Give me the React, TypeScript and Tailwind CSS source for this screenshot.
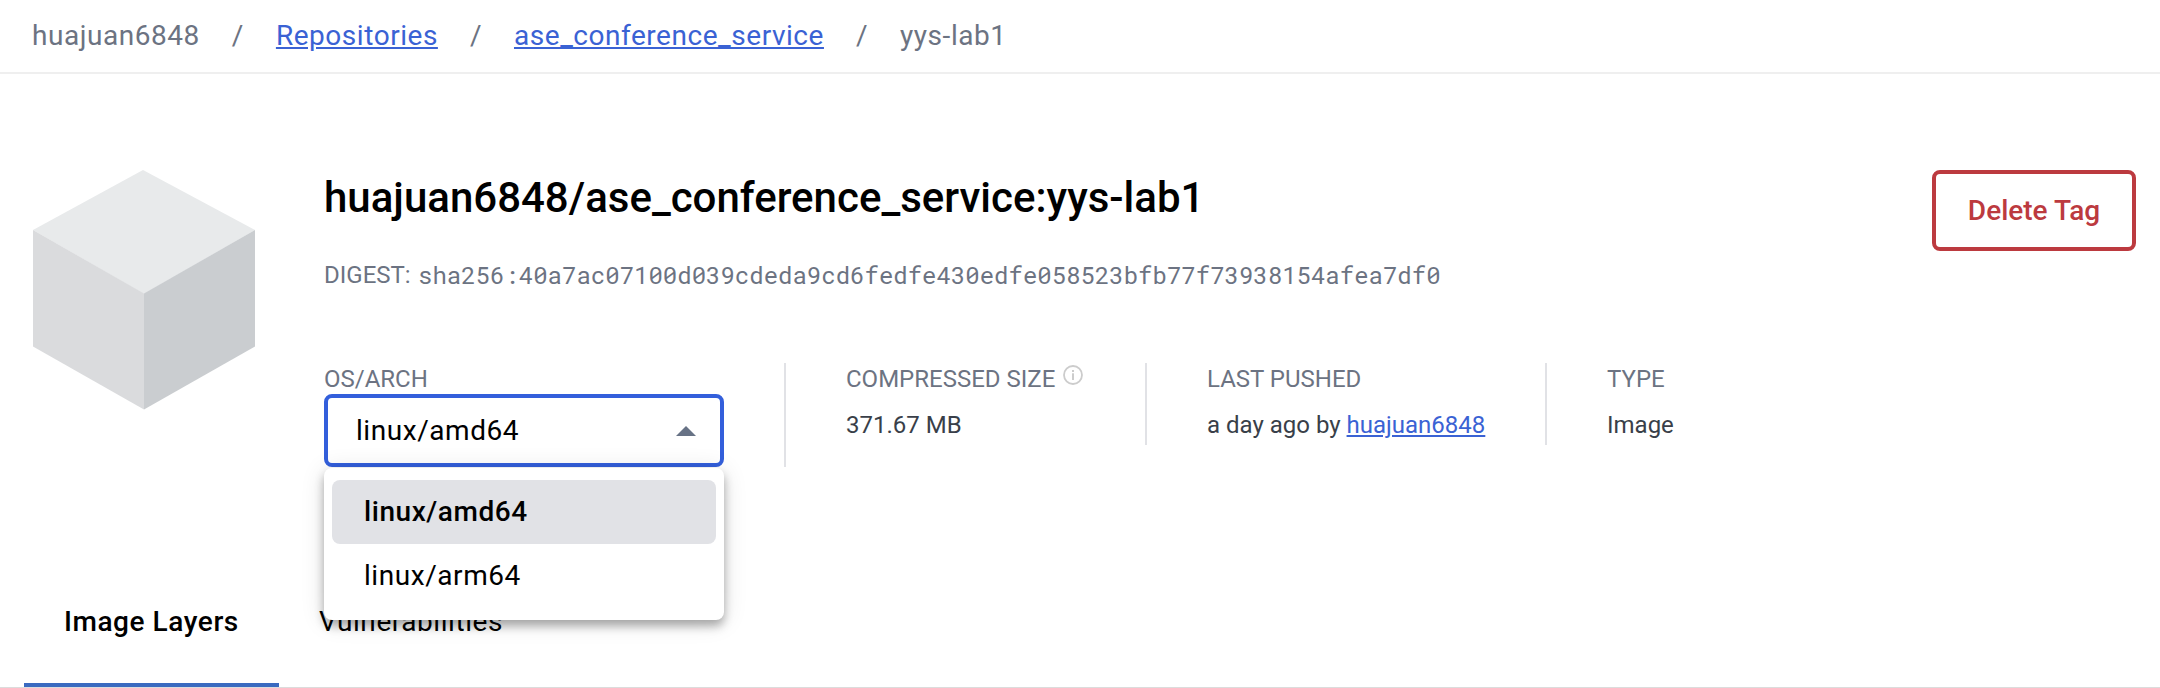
import { ReactNode } from "react";

const digest =
  "sha256:40a7ac07100d039cdeda9cd6fedfe430edfe058523bfb77f73938154afea7df0";

function Cube() {
  return (
    <svg className="block h-[240px] w-[224px]" viewBox="0 0 224 240">
      <polygon points="111,0 223,60 112,124 1,60" fill="#e8eaeb" />
      <polygon points="1,60 112,123.500 112,239.500 1,176.500" fill="#dadbdd" />
      <polygon points="223,60 112,123.500 112,239.500 223,176.500" fill="#cacdd0" />
    </svg>
  );
}

function InfoIcon() {
  return (
    <svg className="mt-0.5 block h-5 w-5" viewBox="0 0 20 20" fill="none">
      <circle cx="10" cy="10" r="9" stroke="#cccccc" strokeWidth="1.8" />
      <rect x="9" y="8.300" width="2" height="6.700" fill="#cccccc" />
      <rect x="9" y="5" width="2" height="2" fill="#cccccc" />
    </svg>
  );
}

function Stat({ label, width, children }: { label: ReactNode; width: string; children: ReactNode }) {
  return (
    <div className={`h-[82px] border-l-2 border-[#e1e2e6] pl-[60px] text-2xl leading-8 whitespace-nowrap ${width}`}>
      <div className="flex text-[#6c7382]">{label}</div>
      <div className="mt-[14px] text-[#393f49]">{children}</div>
    </div>
  );
}

export default function App() {
  return (
    <div className="flex h-[688px] w-[2160px] flex-col overflow-hidden bg-white font-['Roboto',sans-serif] text-black">
      <nav className="flex h-[74px] shrink-0 items-start gap-8 border-b-2 border-[#efefef] pt-4 pl-8 text-[28px] leading-10 tracking-[0.54px] whitespace-nowrap text-[#6c7382]">
        <span>huajuan6848</span>
        <span>/</span>
        <a className="underline text-[#3a62d4]">Repositories</a>
        <span>/</span>
        <a className="underline text-[#3a62d4]">ase_conference_service</a>
        <span>/</span>
        <span>yys-lab1</span>
      </nav>

      <main className="flex h-[492px] shrink-0 items-start pt-24 pr-6 pl-8">
        <Cube />
        <div className="ml-[68px] flex-1">
          <h1 className="h-[56px] text-[42px] leading-[56px] font-medium whitespace-nowrap">
            huajuan6848/ase_conference_service:yys-lab1
          </h1>
          <p className="mt-[33px] flex h-8 text-2xl leading-8 whitespace-nowrap text-[#6c7382]">
            <span className="w-[94px]">DIGEST:</span>
            <span className="font-['Roboto_Mono','Liberation_Mono',monospace]">{digest}</span>
          </p>
          <div className="mt-[72px] flex items-start">
            <div className="relative mr-[60px] w-[400px]">
              <div className="h-[31px] text-2xl leading-8 text-[#6c7382]">OS/ARCH</div>
              <div className="flex h-[73px] items-center justify-between rounded-lg border-4 border-[#335fdb] pr-6 pl-7 text-[28px] tracking-[0.56px]">
                <span>linux/amd64</span>
                <svg className="h-2.5 w-5" viewBox="0 0 20 10">
                  <path d="M0 10 10 0l10 10z" fill="#677285" />
                </svg>
              </div>
              <ul className="absolute top-[105px] left-0 z-10 h-[152px] w-[400px] rounded-lg bg-white px-2 pt-3 text-[28px] leading-[64px] tracking-[0.56px] shadow-[0_6px_10px_rgba(0,0,0,0.3),0_2px_24px_rgba(0,0,0,0.12)]">
                <li className="h-16 rounded-lg bg-[#e1e2e6] pl-8 font-medium">linux/amd64</li>
                <li className="h-16 pl-8">linux/arm64</li>
              </ul>
            </div>
            <div className="h-[104px] border-l-2 border-[#e1e2e6] pl-[60px]">
              <div className="w-[299px] text-2xl leading-8 whitespace-nowrap">
                <div className="flex gap-2 text-[#6c7382]">COMPRESSED SIZE <InfoIcon /></div>
                <div className="mt-[14px] text-[#393f49]">371.67 MB</div>
              </div>
            </div>
            <Stat label="LAST PUSHED" width="w-[400px]">
              a day ago by <a className="underline text-[#3a62d4]">huajuan6848</a>
            </Stat>
            <Stat label="TYPE" width="w-[200px]">Image</Stat>
          </div>
        </div>
        <button className="-ml-[204px] h-[81px] w-[204px] shrink-0 rounded-lg border-4 border-[#bc3a3f] text-[28px] font-medium text-[#bc3a3f]">
          Delete Tag
        </button>
      </main>

      <div className="flex h-[122px] shrink-0 border-b border-[#dcdcdc] pt-[36px] pl-6 text-[28px] leading-10 tracking-[0.56px]">
        <div className="h-[85px] w-[255px] border-b-4 border-[#3a6ac0] pl-10 font-medium">Image Layers</div>
        <div className="pl-10">Vulnerabilities</div>
      </div>
    </div>
  );
}
